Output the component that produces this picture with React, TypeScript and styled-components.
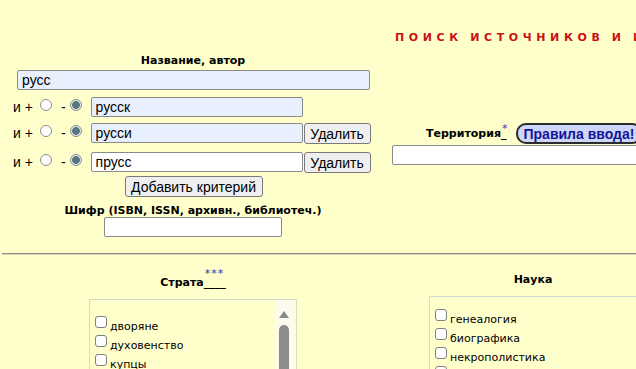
import styled, { createGlobalStyle } from "styled-components";

const GlobalStyle = createGlobalStyle`
  html, body {
    margin: 0;
    padding: 0;
    background: #ffffcc;
    overflow: hidden;
  }
  body {
    font-family: "DejaVu Sans", Verdana, sans-serif;
    color: #000;
  }
`;

const Page = styled.div`
  width: 700px;
  padding-top: 31px;
`;

const Title = styled.h1`
  margin: 0 0 0 395px;
  font-size: 11px;
  line-height: 13px;
  font-weight: bold;
  color: #cc1111;
  letter-spacing: 4.6px;
  word-spacing: -1px;
  white-space: nowrap;
`;

const Columns = styled.div`
  display: grid;
  grid-template-columns: 386px 294px;
`;

const LeftCol = styled.div`
  display: flex;
  flex-direction: column;
  padding-top: 10px;
`;

const RightCol = styled.div<{ $top: number }>`
  display: flex;
  flex-direction: column;
  align-items: flex-start;
  padding-top: ${(p) => p.$top}px;
`;

const Label = styled.div<{ $mb?: number }>`
  font-size: 11px;
  line-height: 13px;
  font-weight: bold;
  text-align: center;
  white-space: nowrap;
  margin-bottom: ${(p) => p.$mb ?? 0}px;
`;

const TextInput = styled.input<{ $w: number; $filled?: boolean }>`
  box-sizing: border-box;
  width: ${(p) => p.$w}px;
  height: 20px;
  margin: 0;
  padding: 0 4px;
  border: 1px solid #8a8a8a;
  border-radius: 2px;
  background: ${(p) => (p.$filled ? "#e8f0fe" : "#ffffff")};
  font-family: "Liberation Sans", Arial, sans-serif;
  font-size: 14px;
  color: #000;
  outline: none;
`;

const MainInputWrap = styled.div`
  padding-left: 17px;
`;

const Rows = styled.div`
  display: flex;
  flex-direction: column;
  padding-left: 13px;
  margin-top: 7px;
`;

const Row = styled.div<{ $mb: number }>`
  display: flex;
  align-items: flex-start;
  height: 20px;
  margin-bottom: ${(p) => p.$mb}px;
`;

const Conj = styled.span`
  font-family: "Liberation Sans", Arial, sans-serif;
  font-size: 14px;
  line-height: 20px;
  white-space: nowrap;
`;

const Radio = styled.span<{ $checked?: boolean; $ml: number }>`
  box-sizing: border-box;
  width: 12px;
  height: 12px;
  margin: 2px 0 0 ${(p) => p.$ml}px;
  border-radius: 50%;
  border: 1px solid #8d8d8d;
  background: ${(p) =>
    p.$checked
      ? "radial-gradient(circle, #587880 0 3.6px, #e4ecee 4.2px)"
      : "#ffffff"};
  flex-shrink: 0;
`;

const Dash = styled.span`
  font-family: "Liberation Sans", Arial, sans-serif;
  font-size: 14px;
  line-height: 20px;
  margin-left: 9px;
`;

const RowInput = styled(TextInput)`
  margin-left: 9px;
`;

const Button = styled.button<{ $w: number }>`
  box-sizing: border-box;
  width: ${(p) => p.$w}px;
  height: 21px;
  margin: 0 0 0 1px;
  padding: 0;
  border: 1px solid #7a7a7a;
  border-radius: 3px;
  background: #efefef;
  font-family: "Liberation Sans", Arial, sans-serif;
  font-size: 14px;
  color: #000;
`;

const AddWrap = styled.div`
  display: flex;
  justify-content: center;
  margin-bottom: 7px;
`;

const CenterBox = styled.div`
  display: flex;
  justify-content: center;
`;

const TerrRow = styled.div`
  display: flex;
  align-items: flex-start;
  height: 21px;
  margin: 0 0 1px 40px;
`;

const TerrLabel = styled.span`
  font-size: 11px;
  font-weight: bold;
  line-height: 13px;
  padding-top: 4px;
  white-space: nowrap;
`;

const Mark = styled.span`
  display: inline-block;
  position: relative;
  font-weight: bold;
`;

const MarkStar = styled.sup<{ $top: number }>`
  position: absolute;
  left: 1px;
  top: ${(p) => p.$top}px;
  font-size: 11px;
  font-weight: normal;
  color: #3333aa;
  line-height: 11px;
  letter-spacing: 1px;
`;

const RulesButton = styled.button`
  height: 21px;
  margin-left: 9px;
  padding: 0 6px 0 6px;
  border: 2px solid #2b2b2b;
  border-radius: 10px;
  background: #cdd6f6;
  color: #14149a;
  font-family: "Liberation Sans", Arial, sans-serif;
  font-size: 14px;
  font-weight: bold;
  line-height: 16px;
  white-space: nowrap;
`;

const TerrInput = styled(TextInput)`
  margin-left: 6px;
`;

const Divider = styled.div`
  height: 1px;
  margin: 16px 0 0 2px;
  background: #8f8f80;
  border-bottom: 1px solid #d6d6bc;
`;

const SectionCol = styled.div<{ $top: number }>`
  display: flex;
  flex-direction: column;
  align-items: center;
  padding-top: ${(p) => p.$top}px;
`;

const SectionLabel = styled.div<{ $mb: number }>`
  font-size: 11px;
  line-height: 13px;
  font-weight: bold;
  margin-bottom: ${(p) => p.$mb}px;
  white-space: nowrap;
`;

const ListBox = styled.div`
  box-sizing: border-box;
  width: 208px;
  height: 140px;
  display: flex;
  border: 1px solid #d2ddd2;
  background: #ffffcc;
`;

const ListItems = styled.div<{ $pt: number }>`
  flex: 1;
  padding: ${(p) => p.$pt}px 0 0 5px;
`;

const Item = styled.div`
  height: 19px;
  font-size: 11px;
  line-height: 19px;
  white-space: nowrap;
`;

const Check = styled.span`
  box-sizing: border-box;
  display: inline-block;
  width: 12px;
  height: 12px;
  margin-right: 3px;
  vertical-align: 2px;
  border: 1px solid #808080;
  border-radius: 3px;
  background: #ffffff;
`;

const Scrollbar = styled.div`
  width: 18px;
  margin-right: 3px;
  display: flex;
  flex-direction: column;
  align-items: center;
  background: #fbfbee;
  padding-top: 11px;
`;

const ArrowUp = styled.div`
  width: 0;
  height: 0;
  border-left: 5px solid transparent;
  border-right: 5px solid transparent;
  border-bottom: 7px solid #8a8a8a;
`;

const Thumb = styled.div`
  width: 10px;
  height: 80px;
  margin-top: 7px;
  border-radius: 5px 5px 0 0;
  background: #8c8c8c;
`;

const strata = ["дворяне", "духовенство", "купцы", "мещане", "крестьяне"];
const sciences = ["генеалогия", "биографика", "некрополистика", "геральдика"];

export default function App() {
  return (
    <>
      <GlobalStyle />
      <Page>
        <Title>ПОИСК ИСТОЧНИКОВ И ИССЛЕДОВАНИЙ</Title>
        <Columns>
          <LeftCol>
            <Label $mb={3}>Название, автор</Label>
            <MainInputWrap>
              <TextInput $w={353} $filled defaultValue="русс" />
            </MainInputWrap>
            <Rows>
              <Row $mb={6}>
                <Conj>и +</Conj>
                <Radio $ml={7} />
                <Dash>-</Dash>
                <Radio $ml={4} $checked />
                <RowInput $w={212} $filled defaultValue="русск" />
              </Row>
              <Row $mb={9}>
                <Conj>и +</Conj>
                <Radio $ml={7} />
                <Dash>-</Dash>
                <Radio $ml={4} $checked />
                <RowInput $w={212} $filled defaultValue="русси" />
                <Button $w={67}>Удалить</Button>
              </Row>
              <Row $mb={4}>
                <Conj>и +</Conj>
                <Radio $ml={7} />
                <Dash>-</Dash>
                <Radio $ml={4} $checked />
                <RowInput $w={212} defaultValue="прусс" />
                <Button $w={67}>Удалить</Button>
              </Row>
            </Rows>
            <AddWrap>
              <Button $w={138}>Добавить критерий</Button>
            </AddWrap>
            <Label>Шифр (ISBN, ISSN, архивн., библиотеч.)</Label>
            <CenterBox>
              <TextInput $w={178} />
            </CenterBox>
          </LeftCol>
          <RightCol $top={79}>
            <TerrRow>
              <TerrLabel>
                Территория
                <Mark>
                  _<MarkStar $top={-4}>*</MarkStar>
                </Mark>
              </TerrLabel>
              <RulesButton>Правила ввода!</RulesButton>
            </TerrRow>
            <TerrInput $w={282} />
          </RightCol>
        </Columns>
        <Divider />
        <Columns>
          <SectionCol $top={21}>
            <SectionLabel $mb={10}>
              Страта
              <Mark>
                ____<MarkStar $top={-8}>***</MarkStar>
              </Mark>
            </SectionLabel>
            <ListBox>
              <ListItems $pt={16}>
                {strata.map((s) => (
                  <Item key={s}>
                    <Check />
                    {s}
                  </Item>
                ))}
              </ListItems>
              <Scrollbar>
                <ArrowUp />
                <Thumb />
              </Scrollbar>
            </ListBox>
          </SectionCol>
          <SectionCol $top={18}>
            <SectionLabel $mb={10}>Наука</SectionLabel>
            <ListBox>
              <ListItems $pt={12}>
                {sciences.map((s) => (
                  <Item key={s}>
                    <Check />
                    {s}
                  </Item>
                ))}
              </ListItems>
            </ListBox>
          </SectionCol>
        </Columns>
      </Page>
    </>
  );
}
